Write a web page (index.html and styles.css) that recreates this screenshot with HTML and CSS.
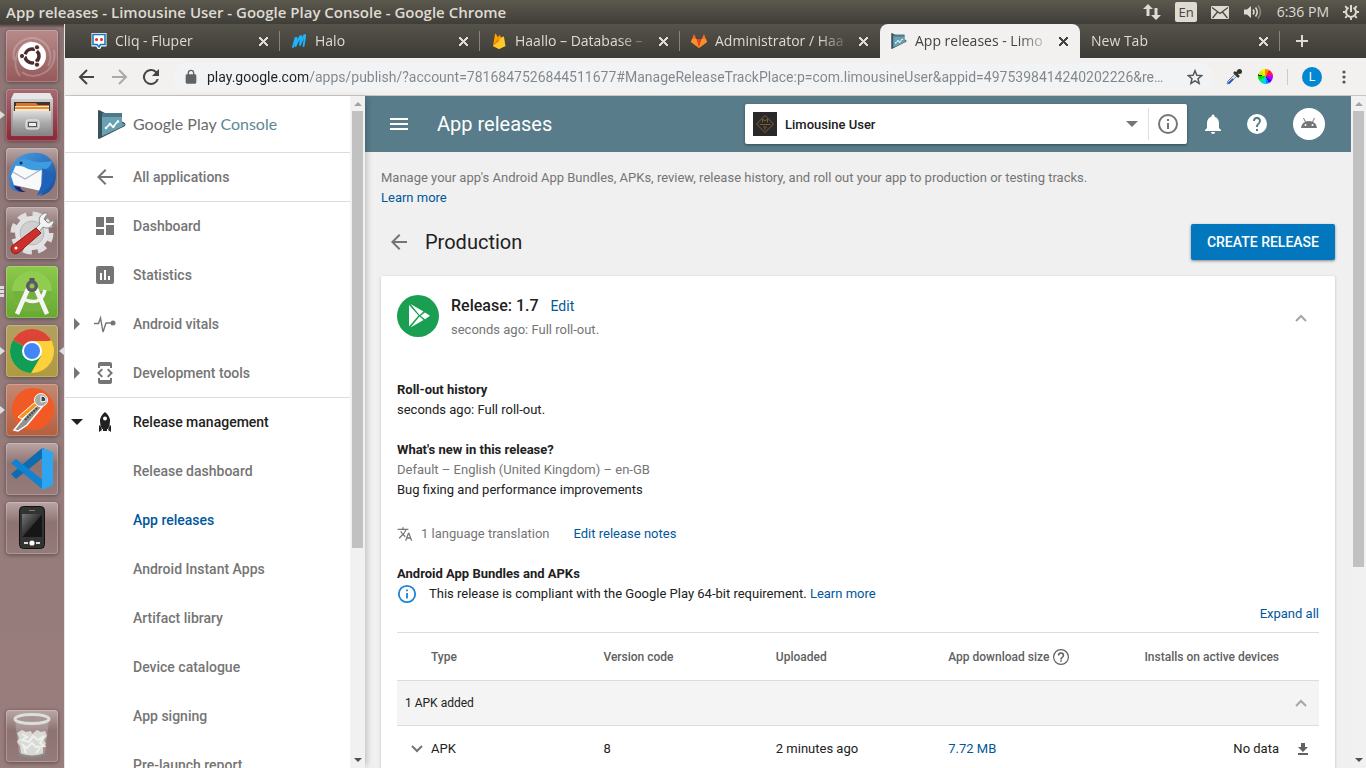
FILE: index.html
```html
<!DOCTYPE html>
<html lang="en">
<head>
<meta charset="utf-8">
<meta name="viewport" content="width=device-width, initial-scale=1">
<title>App releases - Limousine User - Google Play Console</title>
<link rel="stylesheet" href="styles.css">
</head>
<body>
<header class="panel">
  <span class="panel-title">App releases - Limousine User - Google Play Console - Google Chrome</span>
  <div class="panel-tray">
    <svg width="18" height="16" viewBox="0 0 18 16" fill="#dfdbd2"><path d="M5 0l5 5H6.500v7h-3V5H0zM13 16l-5-5h3.500V4h3v7H18z"/></svg>
    <span class="lang">En</span>
    <svg width="18" height="13" viewBox="0 0 18 13"><rect width="18" height="13" rx="1" fill="#dfdbd2"/><path d="M1 1.500l8 6 8-6M1.500 12l5-6M16.500 12l-5-6" fill="none" stroke="#45433d" stroke-width="1.200"/></svg>
    <svg width="20" height="16" viewBox="0 0 20 16" fill="none" stroke="#dfdbd2" stroke-width="1.600"><path d="M1 5.500h3L8 2v12L4 10.500H1z" fill="#dfdbd2" stroke="none"/><path d="M10 5.500q2 2.500 0 5M12.500 3.500q3.500 4.500 0 9"/><path d="M15 1.500q5 6.500 0 13" stroke="#8a877e"/></svg>
    <span>6:36 PM</span>
    <svg width="16" height="16" viewBox="0 0 16 16" fill="none" stroke="#dfdbd2"><path d="M5.500 3.600a5 5 0 1 0 5 0" stroke-width="2"/><path d="M8 1v7" stroke-width="2"/><path d="M2.500 8H0M16 8h-2.500M4 12l-1.800 1.800M12 12l1.800 1.800M8 13.500V16M4 4L2.200 2.200M12 4l1.800-1.800" stroke-width="1.800"/></svg>
  </div>
</header>
<div class="desktop">
  <nav class="dock" aria-label="Launcher">
    <button class="tile tile-ubuntu" aria-label="Dash"><svg width="52" height="52" viewBox="0 0 52 52"><g fill="none" stroke="#fff" stroke-opacity=".22" stroke-width="2"><path d="M8 30C4 12 24 4 34 10c12 6 12 20 8 26M14 46C4 34 12 12 26 12M48 20c4 22-20 32-32 22"/></g><circle cx="26" cy="26" r="14" fill="#fff"/><circle cx="26" cy="26" r="7" fill="none" stroke="#4b2d2b" stroke-width="3.500" stroke-dasharray="12.700 2" stroke-dashoffset="6"/><g fill="#4b2d2b" stroke="#fff"><circle cx="16" cy="26" r="2.600"/><circle cx="31" cy="17.300" r="2.600"/><circle cx="31" cy="34.700" r="2.600"/></g></svg></button>
    <button class="tile tile-files open" aria-label="Files"><svg width="52" height="52" viewBox="0 0 52 52"><defs><linearGradient id="gm" x2="0" y2="1"><stop stop-color="#ddd"/><stop offset=".5" stop-color="#aaa"/><stop offset="1" stop-color="#858585"/></linearGradient></defs><path d="M8 4h36l3 7v35q0 1-1 1H6q-1 0-1-1V11z" fill="url(#gm)"/><path d="M8 4h36l3 6H5z" fill="#e6e6e6"/><path d="M8 13h36v9H8z" fill="#3a3634"/><path d="M10 14h20l2 2h11v6H10z" fill="#d8742c"/><path d="M9 17h34v5H9z" fill="#f5e6d0"/><path d="M9 18h34v2H9z" fill="#f08a24"/><path d="M7 22h38v24H7z" fill="url(#gm)"/><rect x="20" y="31" width="13" height="9" rx="2" fill="#bbb" stroke="#eee"/><rect x="22.500" y="33.500" width="8" height="4" fill="#eee" stroke="#555"/></svg></button>
    <button class="tile" aria-label="Thunderbird Mail"><svg width="52" height="52" viewBox="0 0 52 52"><defs><linearGradient id="tb" x2="1" y2="1"><stop stop-color="#4ba3e6"/><stop offset="1" stop-color="#164a9c"/></linearGradient></defs><path d="M4 38C0 22 8 6 26 5c16-2 25 10 24 24-1 10-6 17-16 19 4-5 4-9 2-13L12 20 7 34l9 10C10 44 6 42 4 38z" fill="url(#tb)"/><path d="M10 17l26 2-1 24-27-6-3-9z" fill="#f8f9fb"/><path d="M7 24l12 7 17-10" fill="none" stroke="#aeb6c1" stroke-width="1.200"/><path d="M10 18c3-8 11-8 16-5 8 2 13 1 20 0-1 6-5 8-10 9-6 1-12 0-16-2-3-2-6-2-10-2z" fill="#3d9be0"/><path d="M36 20c4 8-1 18-5 28 10-5 15-12 17-22" fill="#1e62bc"/><circle cx="15" cy="15" r="1.500" fill="#142b52"/><path d="M8 38c3 6 8 6 12 6-4-1-5-3-6-5z" fill="#25206c"/></svg></button>
    <button class="tile" aria-label="System Settings"><svg width="52" height="52" viewBox="0 0 52 52"><circle cx="26" cy="26" r="18.500" fill="none" stroke="#dedede" stroke-width="6" stroke-dasharray="8.500 6.030"/><circle cx="26" cy="26" r="17" fill="#e2e2e2"/><circle cx="26" cy="26" r="12" fill="#cfcfcf" stroke="#b9b9b9"/><path d="M30 21l4-4c-3-6 2-12 8-11l-4 6 4 4 6-3c0 6-6 10-11 7l-4 5z" fill="#f2f2f2" stroke="#888"/><path d="M30 21l5 5-23 20q-4 2-6-1t0-6z" fill="#cf2f2b" stroke="#8e1a18"/><circle cx="10" cy="41" r="1.500" fill="#fff"/></svg></button>
    <button class="tile tile-studio multi" aria-label="Android Studio"><svg width="52" height="52" viewBox="0 0 52 52"><circle cx="26" cy="25" r="20" fill="#8fcc50"/><path d="M6 25a20 20 0 0 0 40 0z" fill="#74b23d"/><path d="M17 33q18 8 22-9" fill="none" stroke="#f5f5f5" stroke-width="3.500"/><path d="M22 23L11 48M30 23l11 25" stroke="#f5f5f5" stroke-width="4.500"/><path d="M26 12v10" stroke="#555" stroke-width="5"/><circle cx="26" cy="20" r="6" fill="#5a5d5f"/><circle cx="26" cy="20" r="2.500" fill="#8cc35a"/></svg></button>
    <button class="tile tile-chrome open active" aria-label="Google Chrome"><svg width="52" height="52" viewBox="0 0 52 52"><circle cx="26" cy="26" r="22" fill="#fdd13a"/><path d="M26 26L7 15a22 22 0 0 1 38 0z" fill="#db4437"/><path d="M7 15a22 22 0 0 0 18 33l10-17-9-5z" fill="#0f9d58"/><path d="M26 16h19.700L36 31z" fill="#fdd13a"/><circle cx="26" cy="26" r="10" fill="#fff"/><circle cx="26" cy="26" r="8" fill="#4285f4"/></svg></button>
    <button class="tile tile-postman open" aria-label="Postman"><svg width="52" height="52" viewBox="0 0 52 52"><circle cx="27" cy="25" r="21" fill="#f15a24"/><path d="M5 48q4-2 5-8l7 5q-6 2-12 3z" fill="#f15a24"/><path d="M29 20l7 3-15 18-9 6-4-1 9-11z" fill="#8f9492" stroke="#fff" stroke-width="1.500"/><path d="M12 33l16-14 5 1-17 15z" fill="#f7941d" stroke="#fff"/><path d="M19 36l12-12" stroke="#434846" stroke-width="2" stroke-dasharray="2 1"/><circle cx="35" cy="16" r="6.500" fill="#a7aba8" stroke="#fff"/><path d="M35 12q5 0 5 5l-5 1z" fill="#3e4442" stroke="#fff"/></svg></button>
    <button class="tile" aria-label="Visual Studio Code"><svg width="52" height="52" viewBox="0 0 52 52"><path d="M5 31l5 5 28-22V5q-2 0-3 1z" fill="#0d6cb0"/><path d="M5 20l5-4 28 22v8q-2 0-3-1z" fill="#1182d0"/><path d="M36 5l11 4v33l-11 5z" fill="#2da5f1"/></svg></button>
    <button class="tile" aria-label="Phone"><svg width="52" height="52" viewBox="0 0 52 52"><defs><linearGradient id="ph" x2="1" y2="1"><stop stop-color="#777"/><stop offset=".5" stop-color="#333"/><stop offset=".52" stop-color="#161616"/></linearGradient></defs><rect x="13.500" y="4.500" width="25" height="42" rx="4" fill="#333" stroke="#111"/><rect x="16" y="12" width="20" height="23" fill="url(#ph)"/><path d="M23 8.500h6" stroke="#777"/><path d="M18 41h4M30 41h4" stroke="#ddd" stroke-width="2"/><circle cx="26" cy="41" r="2.600" fill="#fff"/></svg></button>
    <button class="tile tile-trash" aria-label="Trash"><svg width="52" height="52" viewBox="0 0 52 52"><path d="M9 10l4 34q13 6 26 0l4-34z" fill="#fff" fill-opacity=".2"/><path d="M11 23l5-3 4 2 5-1 1 3 5-4 4 2 4-1 2 5-3 4 2 4-3 3v7q-12 5-22 0l-1-8-3-4 2-4z" fill="#d9dad6"/><path d="M16 24l5 3-5 3 7 2 4-6 5 4 6-4-4 7 4 3-8 1-4-4-5 5-4-3 3 8M30 43l4-5" stroke="#efefec" stroke-width="2" fill="none"/><path d="M13 44q13 5 26 0" stroke="#889088" stroke-width="2" fill="none"/><ellipse cx="26" cy="9" rx="17" ry="4.500" fill="#a79594" stroke="#dcdedb" stroke-width="3"/></svg></button>
  </nav>
  <div class="browser">
    <div class="tabstrip">
      <div class="tab"><svg width="16" height="16" viewBox="0 0 16 16"><path d="M2 1h12v11H9.500L8 15l-2-3H2z" fill="#fff" stroke="#fff" stroke-width="3"/><path d="M2 1.500h12v10H9.500L8 14l-2-2.500H2z" fill="#fff" stroke="#1274bd" stroke-width="1.500"/><circle cx="5.500" cy="6.500" r="1.500" fill="#e22"/><circle cx="10.500" cy="6.500" r="1.500" fill="#e22"/></svg><span class="tab-title">Cliq - Fluper</span><button class="close" aria-label="Close tab"></button></div>
      <div class="tab"><svg width="16" height="16" viewBox="0 0 16 16"><path d="M2 14L4.500 5Q6 4 5.500 7L4.500 13 9 3.500q1.500-1.500 1 1.500L9 12l4-9.500q1.500-1.500 1 1.500l-1.500 9" fill="none" stroke="#1eb4fa" stroke-width="1.900" stroke-linejoin="round" stroke-linecap="round"/></svg><span class="tab-title">Halo</span><button class="close" aria-label="Close tab"></button></div>
      <div class="tab"><svg width="16" height="16" viewBox="0 0 16 16"><path d="M2 13L4 1q.5-1 1 0l2 3.500L8 2.500q.5-.8 1 0L14 13l-6 3z" fill="#ffa000"/><path d="M2 13l9-9q2-1 2 0l1.500 9L8 16z" fill="#ffca28"/><path d="M2 13L7.500 5 8 8z" fill="#f57c00"/></svg><span class="tab-title">Haallo – Database –</span><button class="close" aria-label="Close tab"></button></div>
      <div class="tab"><svg width="16" height="16" viewBox="0 0 16 16"><path d="M8 15L0 9 3 1l2.500 5.500h5L13 1l3 8z" fill="#fc6d26"/><path d="M8 15L5.500 6.500h5z" fill="#e24329"/><path d="M0 9l1-3h4.500L8 15zM16 9l-1-3h-4.500L8 15z" fill="#fca326" fill-opacity=".7"/></svg><span class="tab-title">Administrator / Haa</span><button class="close" aria-label="Close tab"></button></div>
      <div class="tab current"><svg width="16" height="16" viewBox="0 0 28 29"><use href="#play-console"/></svg><span class="tab-title">App releases - Limo</span><button class="close" aria-label="Close tab"></button></div>
      <div class="tab"><span class="tab-title">New Tab</span><button class="close" aria-label="Close tab"></button></div>
      <button class="new-tab" aria-label="New tab"><svg width="12" height="12" viewBox="0 0 12 12"><path d="M6 0v12M0 6h12" stroke="#dfdbd2" stroke-width="2"/></svg></button>
    </div>
    <div class="toolbar">
      <button class="tool" aria-label="Back"><svg width="24" height="24" viewBox="0 0 24 24" fill="none" stroke="#444" stroke-width="2"><path d="M19 12H6M12 5l-7 7 7 7"/></svg></button>
      <button class="tool" aria-label="Forward"><svg width="24" height="24" viewBox="0 0 24 24" fill="none" stroke="#aaa" stroke-width="2"><path d="M5 12h13M12 5l7 7-7 7"/></svg></button>
      <button class="tool" aria-label="Reload"><svg width="24" height="24" viewBox="0 0 24 24" fill="#444"><path d="M17.650 6.350A8 8 0 1 0 19.730 14h-2.080A6 6 0 1 1 12 6c1.660 0 3.140.690 4.220 1.780L13 11h7V4z"/></svg></button>
      <div class="omnibox">
        <svg width="16" height="16" viewBox="0 0 24 24" fill="#5f6368"><path d="M18 8h-1V6A5 5 0 0 0 7 6v2H6a2 2 0 0 0-2 2v10q0 2 2 2h12q2 0 2-2V10a2 2 0 0 0-2-2zM9 8V6a3 3 0 0 1 6 0v2z"/></svg>
        <input class="url" aria-label="Address" value="play.google.com/apps/publish/?account=7816847526844511677#ManageReleaseTrackPlace:p=com.limousineUser&amp;appid=4975398414240202226&amp;re…">
        <button class="tool" aria-label="Bookmark"><svg width="16" height="16" viewBox="0 0 24 24" fill="none" stroke="#555" stroke-width="2.200"><path d="M12 2.500l2.800 6.800 7.200.6-5.500 4.700 1.700 7L12 17.800l-6.200 3.800 1.700-7L2 9.900l7.200-.6z"/></svg></button>
      </div>
      <div class="extensions">
        <button class="tool" aria-label="Color picker"><svg width="18" height="18" viewBox="0 0 18 18"><path d="M2 16l1-3 7-7 2 2-7 7z" fill="#cfe0f5" stroke="#888"/><path d="M3.500 15.500L8 11" stroke="#1c62d6" stroke-width="2"/><path d="M9 4l5 5M11 6l3-3" stroke="#333" stroke-width="2.500"/><circle cx="14.500" cy="3.500" r="2.500" fill="#333"/></svg></button>
        <button class="tool" aria-label="Color wheel"><span class="wheel"></span></button>
        <span class="rule"></span>
        <button class="profile" aria-label="Profile">L</button>
        <button class="tool" aria-label="Menu"><svg width="16" height="16" viewBox="0 0 16 16" fill="#555"><circle cx="8" cy="3" r="1.600"/><circle cx="8" cy="8" r="1.600"/><circle cx="8" cy="13" r="1.600"/></svg></button>
      </div>
    </div>
    <div class="page">
      <aside class="sidebar">
        <nav class="side-nav" aria-label="Play Console">
          <a class="brand" href="#"><svg width="28" height="29" viewBox="0 0 28 29"><g id="play-console"><path d="M1 0l26 13q1 1.500 0 3L1 29q-1 0-1-1V1q0-1 1-1z" fill="#37535d"/><path d="M4 3h20v10l3.500 1.500L24 16.500 4 26z" fill="#649bad"/><path d="M4 3h20v4H4z" fill="#4d7988"/><path d="M4 26V7h20v9.500z" fill="#69a0b2"/><path d="M8 18l4-4 3 3 5-6" stroke="#fff" stroke-width="1.600" fill="none"/><g fill="#fff"><circle cx="8" cy="18" r="1.300"/><circle cx="12" cy="14" r="1.300"/><circle cx="15.500" cy="16.500" r="1.300"/><circle cx="20" cy="11.500" r="1.300"/></g></g></svg><span>Google Play <em>Console</em></span></a>
          <a class="item ruled" href="#"><span class="twist"></span><svg class="ico" viewBox="0 0 24 24"><path d="M20 11H7.830l5.590-5.590L12 4l-8 8 8 8 1.410-1.410L7.830 13H20z"/></svg>All applications</a>
          <a class="item ruled" href="#"><span class="twist"></span><svg class="ico" viewBox="0 0 24 24"><path d="M3 13h8V3H3zm0 8h8v-6H3zm10 0h8V11h-8zm0-18v6h8V3z"/></svg>Dashboard</a>
          <a class="item" href="#"><span class="twist"></span><svg class="ico" viewBox="0 0 24 24"><path d="M19 3H5a2 2 0 0 0-2 2v14a2 2 0 0 0 2 2h14a2 2 0 0 0 2-2V5a2 2 0 0 0-2-2zM9 17H7v-7h2zm4 0h-2V7h2zm4 0h-2v-4h2z"/></svg>Statistics</a>
          <a class="item" href="#"><span class="twist"><svg width="12" height="12" viewBox="0 0 12 12"><path d="M3 0l6 6-6 6z"/></svg></span><svg class="ico" viewBox="0 0 24 24"><path d="M1 11.500h4.500L7.500 6 10 20l3-9h7" fill="none" stroke="currentColor" stroke-width="1.400"/><circle cx="20" cy="11" r="2.500"/></svg>Android vitals</a>
          <a class="item" href="#"><span class="twist"><svg width="12" height="12" viewBox="0 0 12 12"><path d="M3 0l6 6-6 6z"/></svg></span><svg class="ico" viewBox="0 0 24 24"><path d="M7 5h10v2h2V3a2 2 0 0 0-2-2H7a2 2 0 0 0-2 2v4h2zm8.410 11.590L20 12l-4.590-4.590L14 8.830 17.170 12 14 15.170zM10 15.170L6.830 12 10 8.830 8.590 7.410 4 12l4.590 4.590zM17 19H7v-2H5v4a2 2 0 0 0 2 2h10a2 2 0 0 0 2-2v-4h-2z"/></svg>Development tools</a>
          <a class="item ruled section" href="#"><span class="twist"><svg width="12" height="12" viewBox="0 0 12 12"><path d="M0 3h12L6 9z"/></svg></span><svg class="ico" viewBox="0 0 24 24"><path fill-rule="evenodd" d="M12 2q5 4 5 9t-2 8H9q-2-3-2-8t5-9zm0 4.500a2 2 0 1 0 0 4 2 2 0 0 0 0-4z"/><path d="M7 15l-1 1v6l3-2zM17 15l1 1v6l-3-2zM10 19h4v2h-4z"/></svg>Release management</a>
          <a class="item sub" href="#">Release dashboard</a>
          <a class="item sub selected" href="#">App releases</a>
          <a class="item sub" href="#">Android Instant Apps</a>
          <a class="item sub" href="#">Artifact library</a>
          <a class="item sub" href="#">Device catalogue</a>
          <a class="item sub" href="#">App signing</a>
          <a class="item sub" href="#">Pre-launch report</a>
        </nav>
        <div class="scrollbar"><span class="up"></span><span class="track"><span class="thumb thumb-side"></span></span><span class="down"></span></div>
      </aside>
      <main class="main">
        <div class="view">
        <header class="appbar">
          <button class="icon-btn" aria-label="Open menu"><svg width="24" height="24" viewBox="0 0 24 24"><path d="M3 18h18v-2H3zm0-5h18v-2H3zm0-7v2h18V6z"/></svg></button>
          <h1>App releases</h1>
          <div class="app-picker">
            <svg width="24" height="24" viewBox="0 0 24 24"><path d="M0 0h24v24H0z" fill="#292929"/><path d="M12 3.500l8.500 8.500-8.500 8.500L3.500 12z" fill="none" stroke="#80633c"/><path d="M9.500 10.500V7l2.500 2 2.500-2v3.500M6.500 12.500h11M10 15h4M11 17h2" fill="none" stroke="#7b5f3a"/></svg>
            <select aria-label="Application"><option>Limousine User</option></select>
            <svg width="12" height="6" viewBox="0 0 12 6"><path d="M0 0h12L6 6z" fill="#757575"/></svg>
            <button class="info" aria-label="App information"><svg width="24" height="24" viewBox="0 0 24 24" fill="#757575"><path d="M11 17h2v-6h-2zm1-15a10 10 0 1 0 0 20 10 10 0 0 0 0-20zm0 18a8 8 0 1 1 0-16 8 8 0 0 1 0 16zM11 9h2V7h-2z"/></svg></button>
          </div>
          <button class="icon-btn" aria-label="Notifications"><svg width="24" height="24" viewBox="0 0 24 24"><path d="M12 22a2 2 0 0 0 2-2h-4a2 2 0 0 0 2 2zm6-6v-5c0-3.070-1.640-5.640-4.500-6.320V4a1.500 1.500 0 0 0-3 0v.680C7.630 5.360 6 7.920 6 11v5l-2 2v1h16v-1z"/></svg></button>
          <button class="icon-btn" aria-label="Help"><svg width="24" height="24" viewBox="0 0 24 24"><path d="M12 2a10 10 0 1 0 0 20 10 10 0 0 0 0-20zm1 17h-2v-2h2zm2.070-7.750l-.9.920C13.450 12.900 13 13.500 13 15h-2v-.5c0-1.100.45-2.100 1.170-2.830l1.240-1.260A2 2 0 1 0 10 9H8a4 4 0 1 1 7.070 2.250z"/></svg></button>
          <button class="avatar" aria-label="Account"><svg width="16" height="12" viewBox="0 0 16 12"><path d="M0 10a8 7 0 0 1 16 0z" fill="#757575"/><path d="M4.500 4L2.500 0M11.500 4l2-4" stroke="#757575"/><circle cx="4.500" cy="7" r="1" fill="#fff"/><circle cx="11.500" cy="7" r="1" fill="#fff"/></svg></button>
        </header>
        <div class="content">
          <p class="intro">Manage your app's Android App Bundles, APKs, review, release history, and roll out your app to production or testing tracks.<br><a href="#">Learn more</a></p>
          <div class="title-row">
            <button class="back" aria-label="Back"><svg width="24" height="24" viewBox="0 0 24 24" fill="#757575"><path d="M20 11H7.830l5.590-5.590L12 4l-8 8 8 8 1.410-1.410L7.830 13H20z"/></svg></button>
            <h2>Production</h2>
            <button class="create">CREATE RELEASE</button>
          </div>
          <section class="card">
            <div class="release">
              <svg class="release-logo" width="42" height="42" viewBox="0 0 42 42"><circle cx="21" cy="21" r="21" fill="#1a9f52"/><path d="M12 10l9.500 10.500L12 31.500zM13.500 9l13 7.500-4 3.500zM13.500 32.500l13-7.500-4-3.500zM28 17.500l5 3.300-5 3.400-4.500-3.400z" fill="#fff"/></svg>
              <div class="release-text"><h3>Release: 1.7 <a href="#">Edit</a></h3><p>seconds ago: Full roll-out.</p></div>
              <button class="chevron" aria-label="Collapse release"><svg width="12" height="8" viewBox="0 0 12 8"><path d="M1 7l5-5 5 5"/></svg></button>
            </div>
            <div class="block"><h4>Roll-out history</h4><p>seconds ago: Full roll-out.</p></div>
            <div class="block"><h4>What's new in this release?</h4><p class="muted">Default – English (United Kingdom) – en-GB</p><p>Bug fixing and performance improvements</p></div>
            <div class="translations"><svg width="16" height="16" viewBox="0 0 24 24" fill="#757575"><path d="M12.870 15.070l-2.540-2.510.03-.03A17.500 17.500 0 0 0 14.070 6H17V4h-7V2H8v2H1v2h11.170A15.700 15.700 0 0 1 9 11.350 15.700 15.700 0 0 1 6.690 8h-2a17.600 17.600 0 0 0 2.980 4.560l-5.090 5.020L4 19l5-5 3.110 3.110zM18.500 10h-2L12 22h2l1.120-3h4.750L21 22h2zm-2.620 7l1.620-4.330L19.120 17z"/></svg><span class="muted">1 language translation</span><a href="#">Edit release notes</a></div>
            <h4>Android App Bundles and APKs</h4>
            <p class="compliance"><svg width="20" height="20" viewBox="1 1 22 22" fill="#1a84d6"><path d="M11 17h2v-6h-2zm1-15a10 10 0 1 0 0 20 10 10 0 0 0 0-20zm0 18a8 8 0 1 1 0-16 8 8 0 0 1 0 16zM11 9h2V7h-2z"/></svg><span>This release is compliant with the Google Play 64-bit requirement. <a href="#">Learn more</a></span></p>
            <p class="expand"><a href="#">Expand all</a></p>
            <table class="apks">
              <colgroup><col class="c-twist"><col class="c-data"><col class="c-data"><col class="c-data"><col class="c-data"><col><col class="c-action"></colgroup>
              <thead><tr><th></th><th>Type</th><th>Version code</th><th>Uploaded</th><th><span class="with-help">App download size <svg width="16" height="16" viewBox="2 2 20 20" fill="#616161"><path d="M11 18h2v-2h-2zm1-16a10 10 0 1 0 0 20 10 10 0 0 0 0-20zm0 18.500a8.500 8.500 0 1 1 0-17 8.500 8.500 0 0 1 0 17zM12 6a4 4 0 0 0-4 4h2a2 2 0 1 1 4 0c0 2-3 1.750-3 5h2c0-2.250 3-2.500 3-5a4 4 0 0 0-4-4z"/></svg></span></th><th class="num">Installs on active devices</th><th></th></tr></thead>
              <tbody>
                <tr class="group"><td colspan="6">1 APK added</td><td class="act"><button class="chevron" aria-label="Collapse group"><svg width="12" height="8" viewBox="0 0 12 8"><path d="M1 7l5-5 5 5"/></svg></button></td></tr>
                <tr class="apk"><td class="act"><button class="chevron dark" aria-label="Expand APK"><svg width="12" height="8" viewBox="0 0 12 8"><path d="M1 1l5 5 5-5"/></svg></button></td><td>APK</td><td>8</td><td>2 minutes ago</td><td><a href="#">7.72 MB</a></td><td class="num">No data</td><td class="act"><button class="download" aria-label="Download"><svg width="10" height="12" viewBox="0 0 10 12"><path d="M3 0h4v4h3L5 9 0 4h3zM0 10h10v2H0z" fill="#616161"/></svg></button></td></tr>
              </tbody>
            </table>
          </section>
        </div>
        </div>
        <div class="scrollbar"><span class="up"></span><span class="track"><span class="thumb thumb-main"></span></span><span class="down"></span></div>
      </main>
    </div>
  </div>
</div>
</body>
</html>
```
FILE: styles.css
```css
* { box-sizing: border-box; }
body { margin: 0; height: 100vh; display: flex; flex-direction: column; overflow: hidden; font: 13px/20px Roboto, sans-serif; color: #212121; }
button, input, select { font: inherit; color: inherit; border: 0; margin: 0; padding: 0; background: none; }
button { display: flex; align-items: center; justify-content: center; }
svg { display: block; flex: none; }
h1, h2, h3, h4, p { margin: 0; font-size: 13px; }
a { color: #01579b; text-decoration: none; }

/* Desktop panel */
.panel { flex: none; height: 24px; display: flex; align-items: center; justify-content: space-between; padding: 0 7px 0 6px; background: linear-gradient(#5b584d, #403e39); color: #dfdbd2; font: 14px/20px "Open Sans", sans-serif; white-space: nowrap; }
.panel-title { font-size: 15px; font-weight: 600; }
.panel-tray { display: flex; align-items: center; gap: 14px; }
.lang { padding: 0 3px; border-radius: 2px; background: #dfdbd2; color: #45433d; font-size: 13px; }

/* Launcher */
.desktop { flex: 1; min-height: 0; display: flex; }
.dock { flex: none; width: 64px; padding: 6px; display: flex; flex-direction: column; gap: 7px; background: linear-gradient(#4a3a3a, #8f7676 4px, #997e7d); }
.tile { flex: none; position: relative; width: 52px; height: 52px; border-radius: 4px; background: linear-gradient(#b9a6a5, #8d7372 40%, #957c7b); box-shadow: inset 0 0 0 1px rgba(255, 255, 255, .22), 0 1px 4px rgba(0, 0, 0, .4); }
.tile-ubuntu { background: linear-gradient(#b78b8a, #95585a); }
.tile-files { background: linear-gradient(#a86a72, #8d2536); }
.tile-studio { background: linear-gradient(#8cc94b, #67a832); }
.tile-chrome { background: linear-gradient(#b3a063, #b09a3f); }
.tile-postman { background: linear-gradient(#c28974, #b55f3d); }
.tile-trash { margin-top: auto; }
.open::before { content: ""; position: absolute; left: -6px; top: 22px; border: 4px solid transparent; border-left: 5px solid #ddd; border-right: 0; }
.active::after { content: ""; position: absolute; right: -6px; top: 22px; border: 4px solid transparent; border-right: 5px solid #ddd; border-left: 0; }
.multi::before { content: ""; position: absolute; left: -6px; top: 20px; width: 4px; height: 11px; background: repeating-linear-gradient(#ddd 0 3px, transparent 3px 4px); }

/* Browser frame */
.browser { flex: 1; min-width: 0; display: flex; flex-direction: column; border-left: 1px solid #e8e6e4; }
.tabstrip { flex: none; height: 34px; display: flex; padding-left: 15px; background: linear-gradient(#56534a, #3c3b37); color: #dfdbd2; font: 14px/20px "Open Sans", sans-serif; }
.tab { flex: 0 1 200px; min-width: 0; display: flex; align-items: center; gap: 8px; padding: 0 12px 0 11px; position: relative; }
.tab:not(.current)::after { content: ""; position: absolute; right: 0; top: 7px; height: 20px; width: 1px; background: #85837c; }
.tab:nth-child(4)::after { display: none; }
.tab-title { flex: 1; min-width: 0; overflow: hidden; white-space: nowrap; mask-image: linear-gradient(90deg, #000 calc(100% - 32px), transparent); }
.tab.current { background: #f2f1f0; color: #45433d; border-radius: 8px 8px 0 0; }
.close { width: 9px; height: 9px; background: linear-gradient(45deg, transparent 44%, currentColor 44% 56%, transparent 56%), linear-gradient(-45deg, transparent 44%, currentColor 44% 56%, transparent 56%); }
.new-tab { width: 44px; }
.toolbar { flex: none; height: 38px; display: flex; align-items: center; gap: 8px; padding: 0 14px 0 10px; background: #f2f1f0; border-bottom: 1px solid #c9c7c4; }
.tool { flex: none; min-width: 16px; }
.omnibox { flex: 1; min-width: 0; height: 28px; margin-left: 2px; display: flex; align-items: center; gap: 8px; padding: 0 10px; border-radius: 14px; background: #f1f3f4; }
.url { flex: 1; min-width: 0; height: 24px; font: 14px/20px Roboto, sans-serif; color: transparent; background: linear-gradient(90deg, #202124 101px, #80868b 101px); background-clip: text; -webkit-background-clip: text; text-overflow: ellipsis; }
.extensions { display: flex; align-items: center; gap: 14px; padding-left: 4px; }
.wheel { width: 15px; height: 15px; border-radius: 50%; background: conic-gradient(#f80 0 8%, #f22 8% 17%, #f0a 17% 25%, #a0f 25% 34%, #40f 34% 42%, #08f 42% 50%, #0cf 50% 58%, #0e8 58% 67%, #0d0 67% 77%, #222 77% 80%, #ce0 80% 90%, #fe0 90%); }
.rule { width: 1px; height: 16px; background: #ccc; }
.profile { width: 20px; height: 20px; border-radius: 50%; background: #0288d1; color: #fff; font-size: 12px; }

/* Page */
.page { flex: 1; min-height: 0; display: flex; }
.scrollbar { flex: none; width: 15px; display: flex; flex-direction: column; align-items: center; padding: 6px 0; background: #f1f1f1; }
.up, .down { border: 4px solid transparent; }
.up { border-bottom-color: #a3a3a3; border-top: 0; }
.down { border-top-color: #505050; border-bottom: 0; }
.track { flex: 1; width: 11px; padding: 5px 0; }
.thumb { display: block; background: #c1c1c1; }
.thumb-side { height: 68%; }
.thumb-main { height: 71%; }

.sidebar { flex: none; width: 300px; display: flex; position: relative; z-index: 1; background: #fff; box-shadow: 4px 0 6px -2px rgba(0, 0, 0, .2); }
.side-nav { flex: 1; min-width: 0; overflow: hidden; }
.brand { height: 56px; display: flex; align-items: center; gap: 7px; padding-left: 33px; color: #6b6b6b; font: 16px/24px Lato, sans-serif; white-space: nowrap; }
.brand em { font-style: normal; color: #5b8795; }
.item { height: 49px; display: flex; align-items: center; border-top: 1px solid transparent; color: #757575; font-size: 14px; font-weight: 500; white-space: nowrap; }
.ruled { border-top-color: #dcdcdc; }
.twist { width: 28px; padding-left: 6px; }
.twist svg, .ico { fill: currentColor; }
.ico { width: 24px; height: 24px; margin-right: 16px; }
.sub { padding-left: 68px; }
.section { color: #212121; }
.selected { color: #01579b; }

.main { flex: 1; min-width: 0; display: flex; }
.view { flex: 1; min-width: 0; overflow: hidden; background: #f0f0f0; }
.appbar { height: 56px; display: flex; align-items: center; gap: 20px; padding: 0 26px 0 22px; background: #587c89; color: #fff; }
.appbar h1 { flex: 1; margin-left: 6px; font-size: 20px; font-weight: 400; }
.icon-btn svg { fill: #fff; }
.app-picker { flex: 0 1 442px; height: 40px; margin-right: -6px; display: flex; align-items: center; gap: 8px; padding-left: 8px; border-radius: 2px; background: #fff; color: #212121; box-shadow: 0 1px 3px rgba(0, 0, 0, .4); }
.app-picker select { flex: 1; min-width: 0; height: 40px; padding-top: 2px; appearance: none; font-weight: 500; }
.info { width: 39px; height: 32px; margin-left: 2px; border-left: 1px solid #e0e0e0; }
.avatar { width: 32px; height: 32px; border-radius: 50%; background: #fff; margin-left: 4px; }

.content { padding: 16px; }
.intro { color: #757575; }
.title-row { display: flex; align-items: center; gap: 14px; margin: 16px 0; padding-left: 6px; }
.title-row h2 { flex: 1; font-size: 20px; font-weight: 400; }
.create { height: 36px; padding: 0 16px; border-radius: 2px; background: #0277bd; color: #fff; font-size: 14px; font-weight: 500; box-shadow: 0 1px 3px rgba(0, 0, 0, .45); }
.card { padding: 16px; border-radius: 2px; background: #fff; box-shadow: 0 1px 3px rgba(0, 0, 0, .24); }
.release { display: flex; align-items: center; gap: 12px; height: 52px; margin-bottom: 36px; }
.release-logo { align-self: flex-start; margin-top: 3px; }
.release-text { flex: 1; color: #757575; }
.release-text h3 { color: #212121; font-size: 16px; line-height: 24px; font-weight: 500; }
.release-text h3 a { margin-left: 8px; font-size: 14px; font-weight: 400; }
.release-text p { line-height: 24px; }
.release .chevron { margin-right: 12px; }
.chevron path { fill: none; stroke: #a6a6a6; stroke-width: 2; }
.chevron.dark path { stroke: #757575; }
h4 { font-weight: 700; }
.block { margin-bottom: 20px; }
.muted { color: #757575; }
.translations { display: flex; align-items: center; gap: 8px; margin: 24px 0 20px; }
.translations a { margin-left: 16px; }
.compliance { display: flex; gap: 12px; }
.expand { text-align: right; }
.apks { width: 100%; margin-top: 8px; table-layout: fixed; border-collapse: collapse; }
.apks tr { height: 45px; border-top: 1px solid #dcdcdc; }
.apks thead tr { height: 48px; }
.apks .apk { height: 47px; }
.apks th, .apks td { padding: 0; text-align: left; }
.apks th { font-size: 12px; font-weight: 500; color: #616161; }
.apks .num { text-align: right; }
.c-twist { width: 34px; }
.c-data { width: 18.7%; }
.c-action { width: 40px; }
.with-help { display: flex; align-items: center; gap: 4px; }
.group { background: #f4f4f4; font-size: 12px; }
.apks .group td:first-child { padding-left: 8px; }
.act .chevron { margin-left: auto; width: 36px; }
.act .dark { width: 28px; }
.download { margin-left: auto; width: 32px; }
```
